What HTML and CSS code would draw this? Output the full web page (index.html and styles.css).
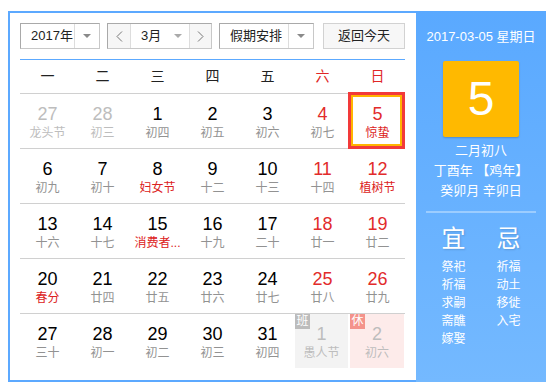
FILE: index.html
```html
<!DOCTYPE html>
<html>
<head>
    <meta charset="utf-8">
    <meta name="viewport" content="width=device-width, initial-scale=1.0">
    <link rel="stylesheet" href="styles.css">
</head>
<body>

<div class="calendar">

    <div class="main">

        <div class="toolbar">
            <div class="select year">
                <span class="value">2017年</span>
                <span class="drop"><i class="caret"></i></span>
            </div>

            <div class="select month">
                <span class="step">
                    <svg width="7" height="11" viewBox="0 0 7 11"><polyline points="6,0.5 1,5.5 6,10.5" fill="none" stroke="#777" stroke-width="1"/></svg>
                </span>
                <span class="value">3月</span>
                <span class="drop flat"><i class="caret"></i></span>
                <span class="step next">
                    <svg width="7" height="11" viewBox="0 0 7 11"><polyline points="1,0.5 6,5.5 1,10.5" fill="none" stroke="#777" stroke-width="1"/></svg>
                </span>
            </div>

            <div class="select holiday">
                <span class="value">假期安排</span>
                <span class="drop"><i class="caret"></i></span>
            </div>

            <div class="today">返回今天</div>
        </div>

        <div class="weekdays">
            <span>一</span><span>二</span><span>三</span><span>四</span><span>五</span>
            <span class="red">六</span><span class="red">日</span>
        </div>

        <div class="week">
            <div class="day other"><b>27</b><em>龙头节</em></div>
            <div class="day other"><b>28</b><em>初三</em></div>
            <div class="day"><b>1</b><em>初四</em></div>
            <div class="day"><b>2</b><em>初五</em></div>
            <div class="day"><b>3</b><em>初六</em></div>
            <div class="day weekend"><b>4</b><em>初七</em></div>
            <div class="day weekend current"><b>5</b><em class="fest">惊蛰</em></div>
        </div>

        <div class="week">
            <div class="day"><b>6</b><em>初九</em></div>
            <div class="day"><b>7</b><em>初十</em></div>
            <div class="day"><b>8</b><em class="fest">妇女节</em></div>
            <div class="day"><b>9</b><em>十二</em></div>
            <div class="day"><b>10</b><em>十三</em></div>
            <div class="day weekend"><b>11</b><em>十四</em></div>
            <div class="day weekend"><b>12</b><em class="fest">植树节</em></div>
        </div>

        <div class="week">
            <div class="day"><b>13</b><em>十六</em></div>
            <div class="day"><b>14</b><em>十七</em></div>
            <div class="day"><b>15</b><em class="fest">消费者...</em></div>
            <div class="day"><b>16</b><em>十九</em></div>
            <div class="day"><b>17</b><em>二十</em></div>
            <div class="day weekend"><b>18</b><em>廿一</em></div>
            <div class="day weekend"><b>19</b><em>廿二</em></div>
        </div>

        <div class="week">
            <div class="day"><b>20</b><em class="fest">春分</em></div>
            <div class="day"><b>21</b><em>廿四</em></div>
            <div class="day"><b>22</b><em>廿五</em></div>
            <div class="day"><b>23</b><em>廿六</em></div>
            <div class="day"><b>24</b><em>廿七</em></div>
            <div class="day weekend"><b>25</b><em>廿八</em></div>
            <div class="day weekend"><b>26</b><em>廿九</em></div>
        </div>

        <div class="week last">
            <div class="day"><b>27</b><em>三十</em></div>
            <div class="day"><b>28</b><em>初一</em></div>
            <div class="day"><b>29</b><em>初二</em></div>
            <div class="day"><b>30</b><em>初三</em></div>
            <div class="day"><b>31</b><em>初四</em></div>
            <div class="day other work"><span class="tag">班</span><b>1</b><em>愚人节</em></div>
            <div class="day other rest"><span class="tag">休</span><b>2</b><em>初六</em></div>
        </div>

    </div>

    <div class="side">
        <div class="side-date">2017-03-05 星期日</div>
        <div class="big-day">5</div>
        <div class="side-lunar">
            <p>二月初八</p>
            <p>丁酉年 【鸡年】</p>
            <p>癸卯月 辛卯日</p>
        </div>
        <div class="side-line"></div>
        <div class="almanac">
            <div class="col">
                <h3>宜</h3>
                <p>祭祀</p>
                <p>祈福</p>
                <p>求嗣</p>
                <p>斋醮</p>
                <p>嫁娶</p>
            </div>
            <div class="col">
                <h3>忌</h3>
                <p>祈福</p>
                <p>动土</p>
                <p>移徙</p>
                <p>入宅</p>
            </div>
        </div>
    </div>

</div>

</body>
</html>
```

FILE: styles.css
```css
body {
    margin: 0;
    background: #fff;
    font-family: "Liberation Sans", "Noto Sans CJK SC", sans-serif;
}

.calendar {
    display: flex;
    width: 538px;
    height: 371px;
    margin: 11px 0 0 8px;
}

/* left part: month grid */

.main {
    box-sizing: border-box;
    width: 408px;
    height: 371px;
    padding: 10px 11px 0 10px;
    border: 2px solid #5ca9ff;
    border-right: none;
}

.toolbar {
    display: flex;
    height: 26px;
    padding-bottom: 10px;
    border-bottom: 1px solid #5ca9ff;
}

.select {
    box-sizing: border-box;
    display: flex;
    height: 26px;
    border: 1px solid #a9a9a9;
    border-right-color: #c8c8c8;
    border-bottom-color: #c8c8c8;
    font-size: 13px;
    line-height: 24px;
    color: #222;
}

.select .value {
    flex: 1;
    padding-left: 10px;
}

.drop {
    display: flex;
    align-items: center;
    justify-content: center;
    width: 24px;
    border-left: 1px solid #ddd;
}

.drop.flat {
    border-left: none;
    width: 22px;
}

.caret {
    width: 0;
    height: 0;
    border-left: 4px solid transparent;
    border-right: 4px solid transparent;
    border-top: 4px solid #8a8a8a;
}

.flat .caret {
    border-top-color: #aaa;
}

.year {
    width: 80px;
}

.month {
    width: 105px;
    margin-left: 7px;
    background: #f6f6f6;
}

.month .value {
    background: #fff;
}

.month .drop {
    background: #fff;
}

.step {
    display: flex;
    align-items: center;
    justify-content: center;
    width: 22px;
    border-right: 1px solid #ddd;
}

.step.next {
    border-right: none;
    border-left: 1px solid #ddd;
    width: 21px;
}

.holiday {
    width: 95px;
    margin-left: 7px;
}

.today {
    box-sizing: border-box;
    width: 82px;
    height: 26px;
    margin-left: 9px;
    border: 1px solid #d2d2d2;
    background: #f7f7f7;
    font-size: 13px;
    line-height: 24px;
    text-align: center;
    color: #222;
}

.weekdays {
    display: grid;
    grid-template-columns: repeat(7, 55px);
    height: 33px;
    border-bottom: 1px solid #d0d0d0;
    font-size: 14px;
    line-height: 33px;
    text-align: center;
    color: #222;
}

.red {
    color: #e02626;
}

.week {
    display: grid;
    grid-template-columns: repeat(7, 55px);
    height: 54px;
    border-bottom: 1px solid #d0d0d0;
}

.week.last {
    border-bottom: none;
}

.day {
    position: relative;
    padding-top: 9px;
    text-align: center;
}

.day b {
    display: block;
    font-size: 18px;
    font-weight: normal;
    line-height: 22px;
    color: #000;
}

.day em {
    display: block;
    font-size: 12px;
    font-style: normal;
    line-height: 16px;
    color: #929292;
    white-space: nowrap;
}

.day.weekend b {
    color: #e22b2b;
}

.day em.fest {
    color: #dc2222;
}

.day.other b,
.day.other em {
    color: #bdbdbd;
}

.day.work {
    margin-right: 2px;
    background: #f3f3f3;
}

.day.rest {
    margin-right: 1px;
    background: #fdebea;
}

.tag {
    position: absolute;
    top: 0;
    left: 0;
    width: 15px;
    height: 15px;
    font-size: 12px;
    line-height: 15px;
    color: #fff;
    background: #bcbcbc;
}

.rest .tag {
    background: #f4938b;
}

.current::after {
    content: "";
    position: absolute;
    top: -2px;
    left: -2px;
    right: 0;
    bottom: -1px;
    border: 3px solid #f23a3a;
    box-shadow: inset 0 0 0 2px #ffb400;
}

/* right part: today panel */

.side {
    box-sizing: border-box;
    width: 130px;
    height: 371px;
    padding: 16px 10px 0 10px;
    background: linear-gradient(#5aa9ff, #74b9ff);
    color: #fff;
    text-align: center;
}

.side-date {
    font-size: 13px;
    line-height: 20px;
}

.big-day {
    width: 76px;
    height: 76px;
    margin: 14px auto 0 auto;
    border-radius: 2px;
    background: #ffb900;
    box-shadow: 0 1px 2px rgba(0, 0, 0, 0.2);
    font-size: 48px;
    line-height: 76px;
}

.side-lunar {
    margin-top: 4px;
    font-size: 13px;
    line-height: 20px;
}

.side-lunar p {
    margin: 0;
}

.side-line {
    height: 2px;
    margin-top: 10px;
    background: rgba(255, 255, 255, 0.35);
}

.almanac {
    display: grid;
    grid-template-columns: 55px 55px;
    margin-top: 11px;
}

.almanac h3 {
    margin: 0 0 4px 0;
    font-size: 24px;
    font-weight: normal;
    line-height: 30px;
    text-shadow: 1px 1px 2px rgba(0, 0, 0, 0.15);
}

.almanac p {
    margin: 0;
    font-size: 12px;
    line-height: 18px;
}
```
